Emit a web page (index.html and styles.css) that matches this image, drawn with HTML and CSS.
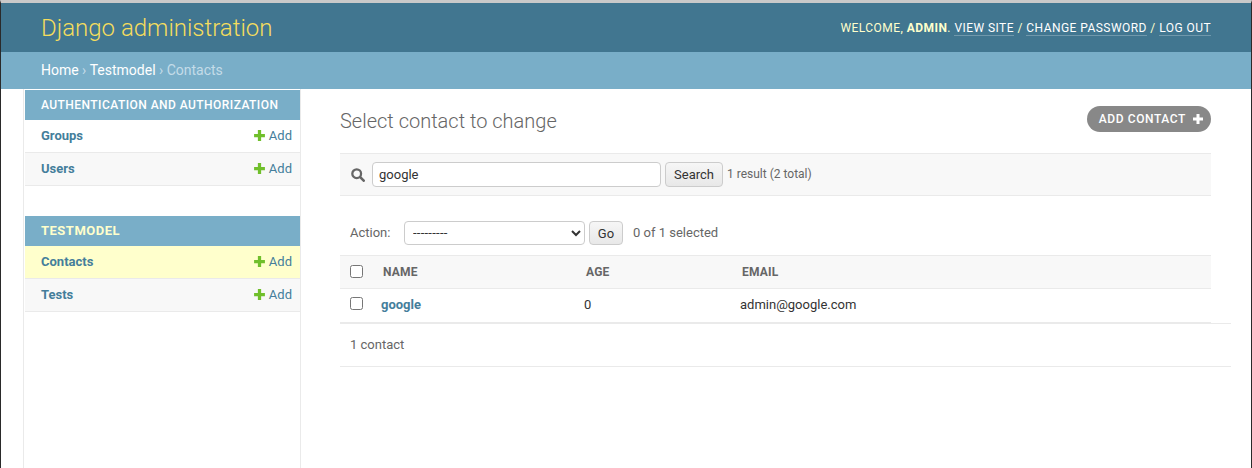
FILE: index.html
```html
<!DOCTYPE html>
<html lang="en">
<head>
<meta charset="utf-8">
<title>Select contact to change | Django site admin</title>
<link rel="stylesheet" href="styles.css">
</head>
<body>
<div class="frame">
  <header class="header">
    <h1 class="brand">Django administration</h1>
    <div class="tools">WELCOME, <strong>ADMIN</strong>. <a href="#">VIEW SITE</a> / <a href="#">CHANGE PASSWORD</a> / <a href="#">LOG OUT</a></div>
  </header>
  <nav class="crumbs"><a href="#">Home</a> › <a href="#">Testmodel</a> › Contacts</nav>
  <div class="main">
    <aside class="sidebar">
      <section class="module">
        <h2 class="caption">Authentication and Authorization</h2>
        <div class="row"><a class="model" href="#">Groups</a><a class="add" href="#"><svg class="plus" viewBox="0 0 12 12"><path d="M4.500 1h3v3.500H11v3H7.500V11h-3V7.500H1v-3h3.500z"/></svg>Add</a></div>
        <div class="row alt"><a class="model" href="#">Users</a><a class="add" href="#"><svg class="plus" viewBox="0 0 12 12"><path d="M4.500 1h3v3.500H11v3H7.500V11h-3V7.500H1v-3h3.500z"/></svg>Add</a></div>
      </section>
      <section class="module">
        <h2 class="caption current-app">Testmodel</h2>
        <div class="row current"><a class="model" href="#">Contacts</a><a class="add" href="#"><svg class="plus" viewBox="0 0 12 12"><path d="M4.500 1h3v3.500H11v3H7.500V11h-3V7.500H1v-3h3.500z"/></svg>Add</a></div>
        <div class="row alt"><a class="model" href="#">Tests</a><a class="add" href="#"><svg class="plus" viewBox="0 0 12 12"><path d="M4.500 1h3v3.500H11v3H7.500V11h-3V7.500H1v-3h3.500z"/></svg>Add</a></div>
      </section>
    </aside>
    <main class="content">
      <div class="title-row">
        <h1 class="title">Select contact to change</h1>
        <a class="addlink" href="#">ADD CONTACT<svg class="plus-w" viewBox="0 0 12 12"><path d="M4.500 1h3v3.500H11v3H7.500V11h-3V7.500H1v-3h3.500z"/></svg></a>
      </div>
      <div class="toolbar">
        <svg class="search-icon" viewBox="0 0 16 16"><circle cx="6.500" cy="6.500" r="5" fill="none" stroke="#666" stroke-width="2.600"/><path d="M10.500 10.500l4 4" stroke="#666" stroke-width="3" stroke-linecap="round"/></svg>
        <input class="search-input" type="text" value="google">
        <button class="btn search-btn" type="button">Search</button>
        <span class="quiet">1 result (<a href="#">2 total</a>)</span>
      </div>
      <div class="actions">
        <label class="action-label">Action:</label>
        <select class="action-select"><option>---------</option></select>
        <button class="btn go-btn" type="button">Go</button>
        <span class="counter">0 of 1 selected</span>
      </div>
      <div class="table">
        <div class="thead">
          <input class="check" type="checkbox">
          <span class="th col-name">NAME</span>
          <span class="th col-age">AGE</span>
          <span class="th">EMAIL</span>
        </div>
        <div class="tr">
          <input class="check" type="checkbox">
          <a class="td col-name2" href="#">google</a>
          <span class="td col-age2">0</span>
          <span class="td">admin@google.com</span>
        </div>
      </div>
      <div class="paginator">1 contact</div>
    </main>
  </div>
</div>
</body>
</html>
```
FILE: styles.css
```css
* { box-sizing: border-box; }
html, body { margin: 0; height: 100%; }
body {
  font-family: Roboto, "Liberation Sans", sans-serif;
  font-size: 14px;
  color: #333;
  background: #fff;
  overflow: hidden;
}
a { text-decoration: none; color: #447e9b; }
.frame {
  height: 468px;
  border-top: 3px solid #c9c9c9;
  border-left: 1px solid #2a2a2a;
  border-right: 1px solid #2a2a2a;
  display: flex;
  flex-direction: column;
}
.header {
  height: 49px;
  background: #417690;
  padding: 0 40px;
  display: flex;
  justify-content: space-between;
  align-items: center;
  flex: none;
}
.brand {
  margin: 0;
  font-size: 24px;
  font-weight: 300;
  color: #f5dd5d;
}
.tools {
  font-size: 12px;
  letter-spacing: 0.45px;
  color: #ffc;
  font-weight: 400;
  margin-top: 1px;
}
.tools strong { font-weight: 700; }
.tools a { color: #fff; border-bottom: 1px solid rgba(255,255,255,.25); }
.crumbs {
  height: 37px;
  background: #79aec8;
  padding: 0 40px 2px;
  display: flex;
  align-items: center;
  gap: 3.400px;
  font-size: 14px;
  font-weight: 400;
  color: #c4dce8;
  flex: none;
}
.crumbs a { color: #fff; }
.main { display: flex; flex: 1; min-height: 0; }
.sidebar {
  width: 278px;
  margin-left: 22px;
  padding-top: 1px;
  border-left: 1px solid #eaeaea;
  border-right: 1px solid #eaeaea;
  padding-left: 1px;
  flex: none;
}
.module { margin-bottom: 30px; }
.caption {
  margin: 0;
  height: 30px;
  background: #79aec8;
  color: #fff;
  font-size: 12px;
  font-weight: 500;
  letter-spacing: 0.45px;
  text-transform: uppercase;
  white-space: nowrap;
  padding: 0 16px 1px;
  display: flex;
  align-items: center;
}
.current-app { color: #ffc; font-size: 13px; font-weight: 700; letter-spacing: 0.5px; }
.row {
  height: 33px;
  display: flex;
  justify-content: space-between;
  align-items: center;
  padding: 0 8px 2px 16px;
  border-bottom: 1px solid #eaeaea;
  font-size: 13px;
}
.alt { background: #f8f8f8; }
.current { background: #ffc; }
.model { font-weight: 700; }
.add { display: flex; align-items: center; gap: 3px; }
.plus { width: 13px; height: 13px; fill: #70bf2b; margin-left: -1px; }
.content { flex: 1; padding: 0 20px 0 39px; min-width: 0; }
.title-row {
  height: 64px;
  margin-right: 20px;
  display: flex;
  justify-content: space-between;
  align-items: flex-start;
}
.title {
  margin: 20px 0 0;
  font-size: 20px;
  font-weight: 300;
  color: #666;
  line-height: 24px;
}
.addlink {
  margin-top: 17px;
  height: 26px;
  border-radius: 13px;
  background: #888;
  color: #fff;
  font-size: 12px;
  font-weight: 500;
  letter-spacing: 0.6px;
  padding: 0 7px 0 12px;
  display: flex;
  align-items: center;
  gap: 6px;
}
.plus-w { width: 12px; height: 12px; fill: #fff; }
.toolbar {
  height: 43px;
  margin-right: 20px;
  border-top: 1px solid #eaeaea;
  border-bottom: 1px solid #eaeaea;
  background: #f8f8f8;
  display: flex;
  align-items: center;
  padding: 0 0 0 11px;
}
.search-icon { width: 14px; height: 14px; margin-right: 7px; }
.search-input {
  width: 289px;
  height: 25px;
  border: 1px solid #ccc;
  border-radius: 4px;
  padding: 0 6px;
  font: 400 13px Roboto, sans-serif;
  color: #333;
  background: #fff;
}
.btn {
  border: 1px solid #ccc;
  border-radius: 4px;
  background: linear-gradient(#f6f6f6, #e8e8e8);
  color: #333;
  font: 400 13px Roboto, sans-serif;
  padding: 0;
}
.search-btn { width: 58px; height: 25px; margin-left: 4px; }
.quiet { font-size: 12px; color: #666; margin-left: 4px; margin-top: -2px; }
.quiet a { color: #666; }
.actions {
  height: 59px;
  margin-right: 20px;
  display: flex;
  align-items: center;
  padding: 14px 0 0 10px;
  font-size: 13px;
  color: #666;
}
.action-label { width: 54px; }
.action-select {
  width: 181px;
  height: 24px;
  border: 1px solid #ccc;
  border-radius: 4px;
  background: #fff;
  font: 400 13px Roboto, sans-serif;
  letter-spacing: 0.25px;
  color: #333;
  padding: 0 4px;
}
.go-btn { width: 34px; height: 24px; margin-left: 4px; padding-top: 2px; }
.counter { margin-left: 10px; }
.table { margin-right: 20px; }
.thead {
  height: 34px;
  background: #f8f8f8;
  border-top: 1px solid #eaeaea;
  border-bottom: 1px solid #eaeaea;
  display: flex;
  align-items: center;
  padding-left: 10px;
}
.tr {
  height: 34px;
  border-bottom: 1px solid #eaeaea;
  display: flex;
  align-items: center;
  padding: 0 0 2px 10px;
}
.check { width: 13px; height: 13px; margin: 0 0 2px; flex: none; }
.th { font-size: 12px; font-weight: 700; color: #666; letter-spacing: 0.2px; }
.col-name { margin-left: 20px; width: 203px; }
.col-age { width: 156px; }
.td { font-size: 13px; color: #333; }
.col-name2 { margin-left: 18px; width: 203px; font-weight: 700; color: #447e9b; }
.col-age2 { width: 156px; }
.paginator {
  height: 44px;
  border-top: 1px solid #eaeaea;
  border-bottom: 1px solid #eaeaea;
  display: flex;
  align-items: center;
  padding: 0 0 2px 10px;
  font-size: 13px;
  color: #666;
}
```
